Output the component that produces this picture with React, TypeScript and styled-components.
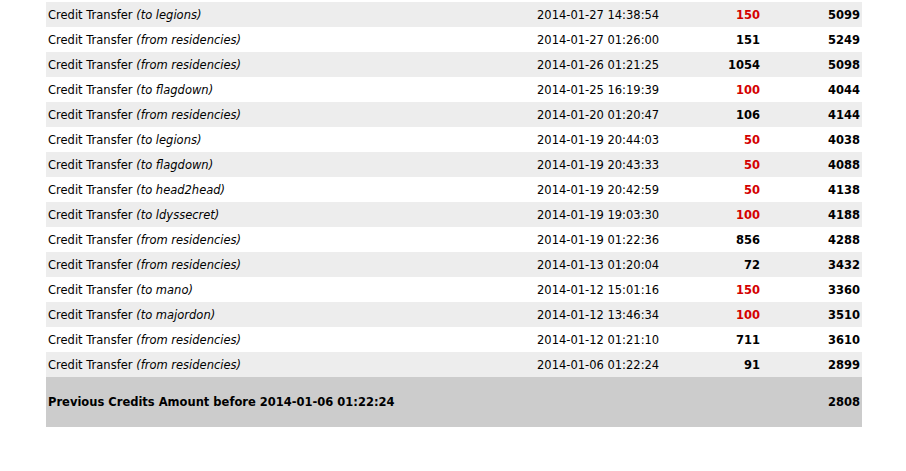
import React from "react";
import styled, { createGlobalStyle } from "styled-components";

const GlobalStyle = createGlobalStyle`
  body {
    margin: 0;
    background: #fff;
    font-family: "DejaVu Sans", Tahoma, Verdana, sans-serif;
    font-size: 11.5px;
    color: #000;
  }
`;

const rows = [
  { to: true, who: "legions", date: "2014-01-27 14:38:54", amount: 150, balance: 5099 },
  { to: false, who: "residencies", date: "2014-01-27 01:26:00", amount: 151, balance: 5249 },
  { to: false, who: "residencies", date: "2014-01-26 01:21:25", amount: 1054, balance: 5098 },
  { to: true, who: "flagdown", date: "2014-01-25 16:19:39", amount: 100, balance: 4044 },
  { to: false, who: "residencies", date: "2014-01-20 01:20:47", amount: 106, balance: 4144 },
  { to: true, who: "legions", date: "2014-01-19 20:44:03", amount: 50, balance: 4038 },
  { to: true, who: "flagdown", date: "2014-01-19 20:43:33", amount: 50, balance: 4088 },
  { to: true, who: "head2head", date: "2014-01-19 20:42:59", amount: 50, balance: 4138 },
  { to: true, who: "ldyssecret", date: "2014-01-19 19:03:30", amount: 100, balance: 4188 },
  { to: false, who: "residencies", date: "2014-01-19 01:22:36", amount: 856, balance: 4288 },
  { to: false, who: "residencies", date: "2014-01-13 01:20:04", amount: 72, balance: 3432 },
  { to: true, who: "mano", date: "2014-01-12 15:01:16", amount: 150, balance: 3360 },
  { to: true, who: "majordon", date: "2014-01-12 13:46:34", amount: 100, balance: 3510 },
  { to: false, who: "residencies", date: "2014-01-12 01:21:10", amount: 711, balance: 3610 },
  { to: false, who: "residencies", date: "2014-01-06 01:22:24", amount: 91, balance: 2899 },
];

export default function App() {
  return (
    <Page>
      <GlobalStyle />
      <Table>
        <colgroup>
          <col style={{ width: 489 }} />
          <col style={{ width: 130 }} />
          <col style={{ width: 97 }} />
          <col style={{ width: 100 }} />
        </colgroup>
        <tbody>
          {rows.map((r, i) => (
            <Row key={i} $odd={i % 2 === 0}>
              <Desc>
                Credit Transfer <em>({r.to ? "to" : "from"} {r.who})</em>
              </Desc>
              <DateCell>{r.date}</DateCell>
              <Num $red={r.to}>{r.amount}</Num>
              <Num>{r.balance}</Num>
            </Row>
          ))}
          <Footer>
            <td colSpan={3}>Previous Credits Amount before 2014-01-06 01:22:24</td>
            <Num>2808</Num>
          </Footer>
        </tbody>
      </Table>
    </Page>
  );
}

const Page = styled.div`
  padding: 2px 0 0 46px;
`;

const Table = styled.table`
  width: 816px;
  border-collapse: collapse;
  table-layout: fixed;

  td {
    padding: 0 2px;
    white-space: nowrap;
  }
`;

const Row = styled.tr<{ $odd?: boolean }>`
  height: 25px;
  background: ${({ $odd }) => ($odd ? "#ededed" : "#fff")};
`;

const Desc = styled.td`
  em {
    font-style: italic;
  }
`;

const DateCell = styled.td``;

const Num = styled.td<{ $red?: boolean }>`
  text-align: right;
  font-weight: bold;
  color: ${({ $red }) => ($red ? "#d40000" : "#000")};
`;

const Footer = styled.tr`
  height: 50px;
  background: #cccccc;
  font-weight: bold;
`;
